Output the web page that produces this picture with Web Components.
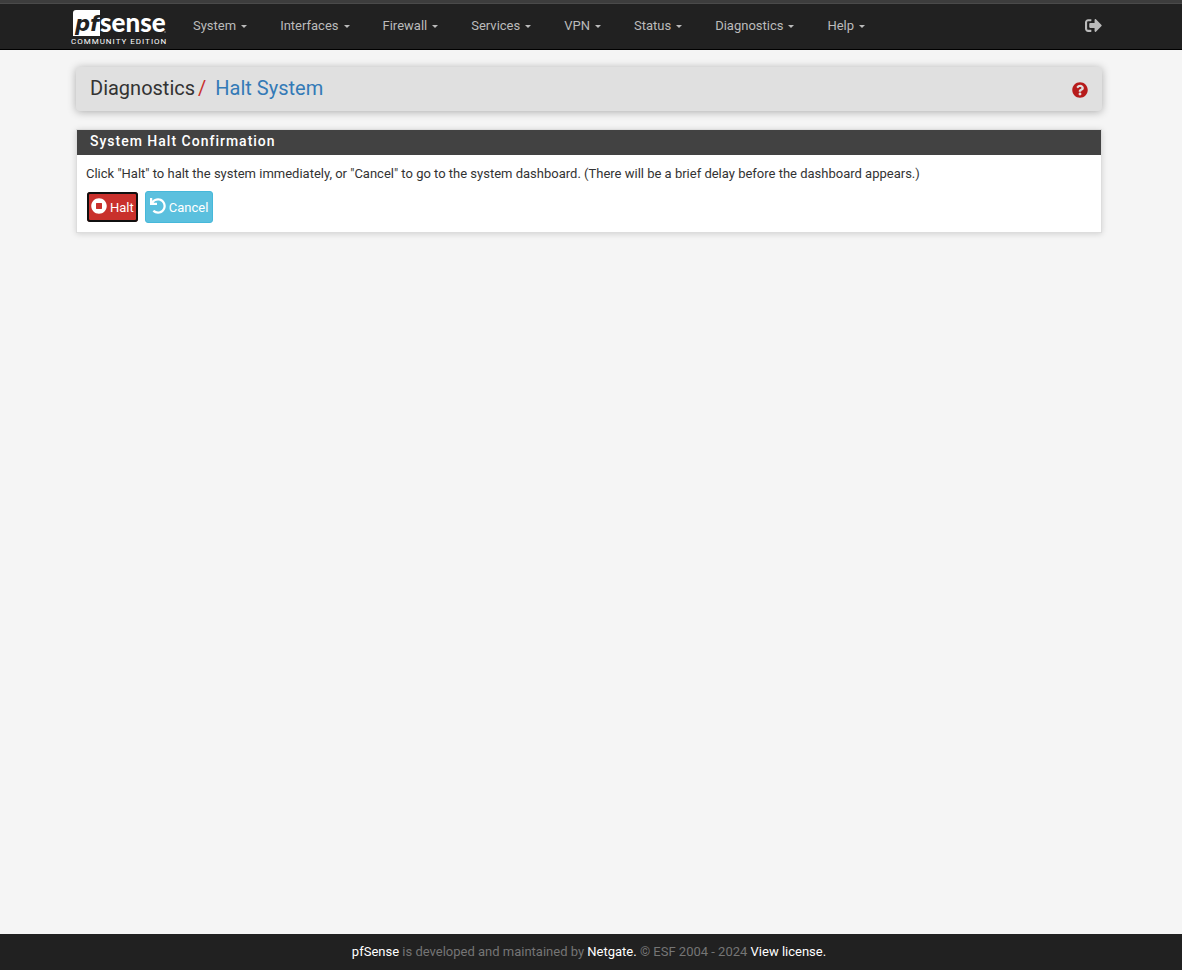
<!DOCTYPE html>
<html lang="en">
<head>
<meta charset="utf-8">
<meta name="viewport" content="width=device-width, initial-scale=1">
<title>Diagnostics: Halt System</title>
<style>
  body {
    margin: 0;
    min-height: 100vh;
    display: flex;
    flex-direction: column;
    background: #f5f5f5;
    color: #333;
    font: 13px/20px Roboto, "Liberation Sans", sans-serif;
    --gutter-left: 76px;
    --gutter-right: 80px;
  }

  main {
    flex: 1;
    display: flex;
    flex-direction: column;
    gap: 18px;
    padding: 17px var(--gutter-right) 20px var(--gutter-left);
  }
</style>
</head>
<body>
<pf-navbar>
  <pf-logo slot="brand"></pf-logo>
  <pf-menu>System</pf-menu>
  <pf-menu>Interfaces</pf-menu>
  <pf-menu>Firewall</pf-menu>
  <pf-menu>Services</pf-menu>
  <pf-menu>VPN</pf-menu>
  <pf-menu>Status</pf-menu>
  <pf-menu>Diagnostics</pf-menu>
  <pf-menu>Help</pf-menu>
</pf-navbar>

<main>
  <pf-breadcrumb section="Diagnostics" page="Halt System"></pf-breadcrumb>
  <pf-panel>
    <span slot="title">System Halt Confirmation</span>
    <pf-halt-form>Click "Halt" to halt the system immediately, or "Cancel" to go to the system dashboard. (There will be a brief delay before the dashboard appears.)</pf-halt-form>
  </pf-panel>
</main>

<pf-footer></pf-footer>

<script>
const icons = {
  logout: '<path d="M497 273L329 441c-15 15-41 4.500-41-17v-96H152c-13.300 0-24-10.700-24-24v-96c0-13.300 10.700-24 24-24h136V88c0-21.400 25.900-32 41-17l168 168c9.300 9.400 9.300 24.600 0 34zM192 436v-40c0-6.600-5.400-12-12-12H96c-17.700 0-32-14.300-32-32V160c0-17.700 14.300-32 32-32h84c6.600 0 12-5.400 12-12V76c0-6.600-5.400-12-12-12H96c-53 0-96 43-96 96v192c0 53 43 96 96 96h84c6.600 0 12-5.400 12-12z"/>',
  help: '<path d="M504 256c0 137-111 248-248 248S8 393 8 256 119 8 256 8s248 111 248 248zM262.700 90c-54.500 0-89.300 23-116.500 63.800-3.500 5.300-2.400 12.400 2.700 16.300l34.700 26.300c5.200 3.900 12.600 3 16.700-2.100 17.900-22.700 30.100-35.800 57.300-35.800 20.400 0 45.700 13.100 45.700 33 0 15-12.400 22.700-32.500 34C247.100 238.500 216 254.900 216 296v4c0 6.600 5.400 12 12 12h56c6.600 0 12-5.400 12-12v-1.300c0-28.500 83.200-29.600 83.200-106.700 0-58-60.200-102-116.500-102zM256 338c-25.400 0-46 20.600-46 46s20.600 46 46 46 46-20.600 46-46-20.600-46-46-46z"/>',
  stop: '<path d="M256 8C119 8 8 119 8 256s111 248 248 248 248-111 248-248S393 8 256 8zm96 328c0 8.800-7.200 16-16 16H176c-8.800 0-16-7.200-16-16V176c0-8.800 7.200-16 16-16h160c8.800 0 16 7.200 16 16v160z"/>',
  undo: '<path d="M212.300 224.300H12c-6.600 0-12-5.400-12-12V12C0 5.400 5.400 0 12 0h48c6.600 0 12 5.400 12 12v78.100C117.800 39.300 184.300 7.500 258.200 8c136.900 1 246.400 111.600 246.200 248.500C504.100 393.300 393.100 504 256.300 504c-64.100 0-122.500-24.300-166.500-64.200-5.100-4.600-5.300-12.600-.5-17.400l34-34c4.500-4.500 11.700-4.700 16.400-.5C170.800 415.300 211.600 432 256.300 432c97.300 0 176-78.700 176-176 0-97.300-78.700-176-176-176-58.500 0-110.300 28.500-142.300 72.300h98.300c6.600 0 12 5.400 12 12v48c0 6.600-5.400 12-12 12z"/>',
};

function icon(name) {
  return `<svg class="icon" viewBox="0 0 512 512" fill="currentColor" aria-hidden="true">${icons[name]}</svg>`;
}

class PfElement extends HTMLElement {
  constructor() {
    super();
    this.attachShadow({ mode: 'open' });
  }

  connectedCallback() {
    this.shadowRoot.innerHTML = this.template();
  }
}

class PfNavbar extends PfElement {
  template() {
    return `
      <style>
        :host {
          display: block;
          background: #212121;
          border-top: 3px solid #3d3d3d;
          border-bottom: 1px solid #000;
        }
        nav {
          display: flex;
          align-items: center;
          height: 43px;
          border-top: 1px solid #4a4a4a;
          padding: 0 var(--gutter-right) 2px 71px;
        }
        .brand { margin-right: 10px; }
        .menus { display: flex; flex: 1; gap: 1px; }
        .logout { display: flex; color: #bbb; }
        .icon { width: 17px; height: 17px; }
      </style>
      <nav>
        <a class="brand" href="#" aria-label="Dashboard"><slot name="brand"></slot></a>
        <div class="menus"><slot></slot></div>
        <a class="logout" href="#" aria-label="Logout">${icon('logout')}</a>
      </nav>
    `;
  }
}

class PfLogo extends PfElement {
  template() {
    return `
      <style>
        :host { display: block; }
        svg { display: block; width: 96px; height: 38px; overflow: visible; }
      </style>
      <svg viewBox="0 0 96 38">
        <path d="M5 3H29V29H2V6Q2 3 5 3Z" fill="#fff"/>
        <text x="4" y="24" font-family="DejaVu Sans, sans-serif" font-size="21" font-weight="700" font-style="italic" fill="#212121">pf</text>
        <text x="29" y="25" font-family="Lato, sans-serif" font-size="26" font-weight="900" fill="#fff">sense</text>
        <circle cx="94" cy="25" r="0.700" fill="#aaa"/>
        <text x="0" y="37" font-family="Roboto, sans-serif" font-size="8" letter-spacing="1" fill="#fff">COMMUNITY EDITION</text>
      </svg>
    `;
  }
}

class PfMenu extends PfElement {
  template() {
    return `
      <style>
        :host { display: block; }
        a {
          display: flex;
          align-items: center;
          gap: 5px;
          padding: 0 16px;
          color: #bbb;
          text-decoration: none;
        }
        a::after {
          content: "";
          margin-top: 2px;
          border: 3px solid transparent;
          border-top-color: currentColor;
          border-bottom: 0;
        }
      </style>
      <a href="#"><slot></slot></a>
    `;
  }
}

class PfBreadcrumb extends PfElement {
  template() {
    return `
      <style>
        :host {
          display: flex;
          align-items: center;
          justify-content: space-between;
          height: 44px;
          padding: 0 14px;
          background: #e0e0e0;
          border-radius: 4px;
          box-shadow: 0 1px 8px rgba(0, 0, 0, .3);
        }
        h1 {
          display: flex;
          margin: 0;
          padding-bottom: 2px;
          font-size: 20px;
          font-weight: 400;
          line-height: 24px;
        }
        .slash { margin: 0 9px 0 3px; color: #c9302c; }
        a { color: #337ab7; text-decoration: none; }
        .help { display: flex; margin-top: 2px; color: #b71c1c; }
        .icon { width: 16px; height: 16px; }
      </style>
      <h1>
        <span>${this.getAttribute('section')}</span>
        <span class="slash">/</span>
        <a href="#">${this.getAttribute('page')}</a>
      </h1>
      <a class="help" href="#" aria-label="Help for items on this page">${icon('help')}</a>
    `;
  }
}

class PfPanel extends PfElement {
  template() {
    return `
      <style>
        :host {
          display: block;
          background: #fff;
          border: 1px solid #ddd;
          box-shadow: 0 1px 6px rgba(0, 0, 0, .15);
        }
        h2 {
          margin: 0;
          padding: 0 13px 3px;
          background: #424242;
          color: #fff;
          font-size: 14px;
          font-weight: 500;
          line-height: 22px;
          letter-spacing: 1px;
        }
        .body { padding: 9px; }
      </style>
      <h2><slot name="title"></slot></h2>
      <div class="body"><slot></slot></div>
    `;
  }
}

class PfHaltForm extends PfElement {
  template() {
    return `
      <style>
        p { margin: 0 0 7px; }
        .actions { display: flex; gap: 6px; }
        button {
          display: flex;
          align-items: center;
          gap: 3px;
          box-sizing: border-box;
          height: 32px;
          padding: 2px 4px 0;
          border: 1px solid;
          border-radius: 3px;
          color: #fff;
          font: inherit;
        }
        .halt {
          height: 30px;
          margin: 1px;
          padding: 2px 3px 0;
          background: #c9302c;
          border-color: #ac2925;
          outline: 2px solid #101010;
          outline-offset: -2px;
        }
        .cancel { background: #5bc0de; border-color: #46b8da; }
        .icon { width: 16px; height: 16px; margin-bottom: 4px; }
      </style>
      <form>
        <p><slot></slot></p>
        <div class="actions">
          <button type="button" class="halt">${icon('stop')}Halt</button>
          <button type="button" class="cancel">${icon('undo')}Cancel</button>
        </div>
      </form>
    `;
  }
}

class PfFooter extends PfElement {
  template() {
    return `
      <style>
        :host {
          display: block;
          padding: 8px 4px 8px 0;
          background: #212121;
          color: #757575;
          text-align: center;
        }
        a { color: #fff; text-decoration: none; }
      </style>
      <footer>
        <a href="#">pfSense</a> is developed and maintained by <a href="#">Netgate.</a> © ESF 2004 - 2024 <a href="#">View license.</a>
      </footer>
    `;
  }
}

customElements.define('pf-navbar', PfNavbar);
customElements.define('pf-logo', PfLogo);
customElements.define('pf-menu', PfMenu);
customElements.define('pf-breadcrumb', PfBreadcrumb);
customElements.define('pf-panel', PfPanel);
customElements.define('pf-halt-form', PfHaltForm);
customElements.define('pf-footer', PfFooter);
</script>
</body>
</html>
